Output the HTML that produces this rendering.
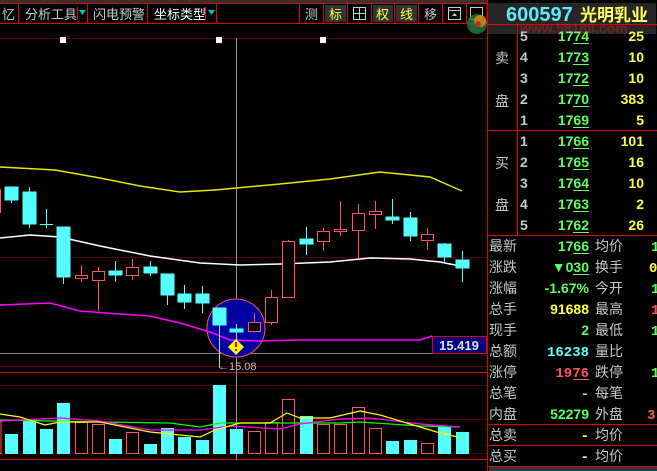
<!DOCTYPE html>
<html><head><meta charset="utf-8"><style>
body{margin:0;background:#000;width:657px;height:471px;overflow:hidden}
svg{display:block}
text{font-family:"Liberation Sans","Noto Sans CJK SC",sans-serif}
.z{font-size:14px;fill:#c8c8c8}
.t{font-size:13px;fill:#c8c8c8}
.n{font-family:"Liberation Mono","DejaVu Sans Mono",monospace;font-size:14px;font-weight:bold}
</style></head><body>
<svg width="657" height="471" viewBox="0 0 657 471">
<rect width="657" height="471" fill="#000"/>
<rect x="0" y="0" width="487" height="3" fill="#333"/>
<g fill="none" stroke="#e00000" stroke-width="1">
<rect x="-1" y="3.5" width="488" height="20"/>
<line x1="18.5" y1="3" x2="18.5" y2="24"/><line x1="87.5" y1="3" x2="87.5" y2="24"/><line x1="147.5" y1="3" x2="147.5" y2="24"/><line x1="216.5" y1="3" x2="216.5" y2="24"/><line x1="299.5" y1="3" x2="299.5" y2="24"/><line x1="323.5" y1="3" x2="323.5" y2="24"/><line x1="347.5" y1="3" x2="347.5" y2="24"/><line x1="371.5" y1="3" x2="371.5" y2="24"/><line x1="394.5" y1="3" x2="394.5" y2="24"/><line x1="418.5" y1="3" x2="418.5" y2="24"/><line x1="442.5" y1="3" x2="442.5" y2="24"/><line x1="466.5" y1="3" x2="466.5" y2="24"/>
</g>
<rect x="325" y="5" width="21" height="17" fill="#333"/>
<rect x="373" y="5" width="20" height="17" fill="#333"/>
<rect x="396" y="5" width="21" height="17" fill="#333"/>
<text class="t" x="2" y="19">忆</text>
<text class="t" x="25" y="19">分析工具</text><line x1="77.5" y1="7" x2="77.5" y2="20" stroke="#e00"/><path d="M79 10h7l-3.5 5z" fill="#00c0c0"/>
<text class="t" x="93" y="19">闪电预警</text>
<text class="t" x="154" y="19" style="fill:#fff">坐标类型</text><line x1="205.5" y1="7" x2="205.5" y2="20" stroke="#e00"/><path d="M208 10h7l-3.5 5z" fill="#00c0c0"/>
<text class="t" x="305" y="19">测</text>
<text class="t" x="329" y="19" style="fill:#ffff40">标</text>
<rect x="353.5" y="7.5" width="12" height="12" fill="none" stroke="#ccc"/><line x1="359.5" y1="8" x2="359.5" y2="19" stroke="#ccc"/><line x1="354" y1="13.5" x2="365" y2="13.5" stroke="#ccc"/>
<text class="t" x="376" y="19" style="fill:#ffff40">权</text>
<text class="t" x="400" y="19" style="fill:#ffff40">线</text>
<text class="t" x="424" y="19">移</text>
<rect x="448.5" y="7.5" width="12" height="12" fill="none" stroke="#ccc"/><line x1="449" y1="10.5" x2="460" y2="10.5" stroke="#ccc"/><path d="M452 16l2.5-3 2.5 3z" fill="#ccc"/>
<rect x="470.5" y="7.5" width="12" height="12" fill="none" stroke="#ccc"/>
<circle cx="477" cy="24" r="10" fill="#208040" opacity="0.8"/><circle cx="480" cy="21" r="6" fill="#c08020"/><circle cx="478" cy="24" r="3" fill="#c03020"/>
<line x1="0" y1="38.5" x2="487" y2="38.5" stroke="#600000"/>
<line x1="0" y1="257.5" x2="487" y2="257.5" stroke="#500000"/>
<line x1="0" y1="353.5" x2="487" y2="353.5" stroke="#808080"/>
<line x1="0" y1="366.5" x2="487" y2="366.5" stroke="#600000"/>
<line x1="0" y1="372.5" x2="487" y2="372.5" stroke="#e00000"/>
<line x1="0" y1="385.5" x2="487" y2="385.5" stroke="#500000"/>
<line x1="0" y1="419.5" x2="487" y2="419.5" stroke="#500000"/>
<line x1="0" y1="453.5" x2="487" y2="453.5" stroke="#500000"/>
<line x1="0" y1="459.5" x2="487" y2="459.5" stroke="#e00000"/>
<line x1="236.5" y1="38" x2="236.5" y2="460" stroke="#909090"/>
<g fill="#fff"><rect x="60" y="37" width="6" height="6"/><rect x="216" y="37" width="6" height="6"/><rect x="320" y="37" width="6" height="6"/></g>
<circle cx="236" cy="328" r="29" fill="#0000a0" stroke="#ff5050"/>
<polyline fill="none" stroke="#e8e800" stroke-width="1.5" points="0,167 55,170 100,178 140,186 180,192 215,190 280,184 330,179 380,172 430,177 462,191"/>
<polyline fill="none" stroke="#fff" stroke-width="1.5" points="0,238 30,235 60,237 100,246 150,256 200,263 240,265 280,264 330,262 370,258 410,259 440,262 460,266"/>
<polyline fill="none" stroke="#ff00ff" stroke-width="1.5" points="0,305 50,303 80,311 120,314 150,316 180,323 210,332 230,340 260,341 300,340 420,340 432,336"/>
<g fill="#55ffff" stroke="#55ffff">
<line x1="11.5" y1="187" x2="11.5" y2="203"/><rect x="5" y="187" width="13" height="13"/>
<line x1="29.5" y1="187" x2="29.5" y2="228"/><rect x="23" y="192" width="13" height="32"/>
<line x1="46.5" y1="209" x2="46.5" y2="228"/><line x1="40" y1="224.5" x2="53" y2="224.5"/>
<line x1="63.5" y1="227" x2="63.5" y2="284"/><rect x="57" y="227" width="13" height="50"/>
<line x1="115.5" y1="261" x2="115.5" y2="282"/><rect x="109" y="271" width="13" height="4"/>
<line x1="150.5" y1="261" x2="150.5" y2="276"/><rect x="144" y="267" width="13" height="6"/>
<line x1="167.5" y1="274" x2="167.5" y2="305"/><rect x="161" y="274" width="13" height="21"/>
<line x1="184.5" y1="285" x2="184.5" y2="309"/><rect x="178" y="294" width="13" height="8"/>
<line x1="202.5" y1="286" x2="202.5" y2="313"/><rect x="196" y="294" width="13" height="9"/>
<line x1="219.5" y1="308" x2="219.5" y2="368"/><rect x="213" y="308" width="13" height="17"/>
<line x1="236.5" y1="324" x2="236.5" y2="340"/><rect x="230" y="329" width="13" height="3"/>
<line x1="306.5" y1="227" x2="306.5" y2="255"/><rect x="300" y="239" width="13" height="5"/>
<line x1="392.5" y1="199" x2="392.5" y2="224"/><rect x="386" y="217" width="13" height="3"/>
<line x1="410.5" y1="212" x2="410.5" y2="241"/><rect x="404" y="218" width="13" height="18"/>
<line x1="444.5" y1="243" x2="444.5" y2="262"/><rect x="438" y="244" width="13" height="13"/>
<line x1="462.5" y1="251" x2="462.5" y2="282"/><rect x="456" y="260" width="13" height="8"/>
</g>
<g fill="#000" stroke="#ff5555">
<line x1="0.5" y1="189" x2="0.5" y2="213"/>
<line x1="81.5" y1="265" x2="81.5" y2="282"/><rect x="75.5" y="275.5" width="12" height="3"/>
<line x1="98.5" y1="267" x2="98.5" y2="311"/><rect x="92.5" y="271.5" width="12" height="9"/>
<line x1="132.5" y1="259" x2="132.5" y2="280"/><rect x="126.5" y="267.5" width="12" height="8"/>
<line x1="254.5" y1="313" x2="254.5" y2="331"/><rect x="248.5" y="322.5" width="12" height="9"/>
<line x1="271.5" y1="290" x2="271.5" y2="325"/><rect x="265.5" y="297.5" width="12" height="25"/>
<line x1="288.5" y1="240" x2="288.5" y2="297"/><rect x="282.5" y="241.5" width="12" height="56"/>
<line x1="323.5" y1="228" x2="323.5" y2="251"/><rect x="317.5" y="231.5" width="12" height="10"/>
<line x1="340.5" y1="201" x2="340.5" y2="236"/><rect x="334.5" y="229.5" width="12" height="2"/>
<line x1="358.5" y1="204" x2="358.5" y2="258"/><rect x="352.5" y="213.5" width="12" height="17"/>
<line x1="375.5" y1="201" x2="375.5" y2="229"/><rect x="369.5" y="211.5" width="12" height="3"/>
<line x1="427.5" y1="228" x2="427.5" y2="250"/><rect x="421.5" y="234.5" width="12" height="6"/>
</g>
<path d="M236 339l8 8-8 8-8-8z" fill="#ffff00"/><rect x="235" y="342" width="2" height="5" fill="#e00"/><rect x="235" y="349" width="2" height="2" fill="#e00"/>
<rect x="432.5" y="336.5" width="54" height="17" fill="#000080" stroke="#e00000"/>
<text x="459" y="350" text-anchor="middle" style="font-family:'Liberation Sans',sans-serif;font-size:13px;font-weight:bold;fill:#e0e0e0">15.419</text>
<text x="218" y="370" style="font-family:'Liberation Sans',sans-serif;font-size:11px;fill:#c0c0c0">←15.08</text>
<g fill="#55ffff">
<rect x="5" y="434" width="13" height="20"/><rect x="23" y="420" width="13" height="34"/><rect x="40" y="429" width="13" height="25"/><rect x="57" y="403" width="13" height="51"/>
<rect x="109" y="439" width="13" height="15"/><rect x="144" y="444" width="13" height="10"/><rect x="161" y="428" width="13" height="26"/><rect x="178" y="437" width="13" height="17"/><rect x="196" y="440" width="13" height="14"/><rect x="213" y="385" width="13" height="69"/><rect x="230" y="429" width="13" height="25"/><rect x="300" y="416" width="13" height="38"/><rect x="386" y="441" width="13" height="13"/><rect x="404" y="440" width="13" height="14"/><rect x="438" y="426" width="13" height="28"/><rect x="456" y="432" width="13" height="22"/>
</g>
<g fill="none" stroke="#ff5555">
<rect x="-1" y="421.5" width="2" height="32"/>
<rect x="75.5" y="422.5" width="12" height="31"/><rect x="92.5" y="424.5" width="12" height="29"/><rect x="126.5" y="432.5" width="12" height="21"/><rect x="248.5" y="431.5" width="12" height="22"/><rect x="265.5" y="422.5" width="12" height="31"/><rect x="282.5" y="399.5" width="12" height="54"/><rect x="317.5" y="424.5" width="12" height="29"/><rect x="334.5" y="424.5" width="12" height="29"/><rect x="352.5" y="407.5" width="12" height="46"/><rect x="369.5" y="428.5" width="12" height="25"/><rect x="421.5" y="443.5" width="12" height="10"/>
</g>
<polyline fill="none" stroke="#00ff00" stroke-width="1.2" points="0,420 100,422 170,423 200,427 220,423 300,423 340,423 360,422 420,426 460,427"/>
<polyline fill="none" stroke="#ff00ff" stroke-width="1.2" points="0,421 60,418 100,421 150,430 200,430 230,426 280,429 300,424 340,419 370,418 420,424 460,427"/>
<polyline fill="none" stroke="#ffff00" stroke-width="1.2" points="0,414 20,417 45,425 60,422 100,422 150,432 200,437 215,430 240,423 270,423 287,413 300,418 330,418 360,411 380,415 420,427 440,433 458,437"/>
<rect x="488" y="3" width="168" height="31" fill="#262626"/>
<line x1="487.5" y1="0" x2="487.5" y2="471" stroke="#e00000"/>
<line x1="487" y1="24.5" x2="657" y2="24.5" stroke="#e00000"/>
<text x="506" y="21" style="font-family:'Liberation Sans',sans-serif;font-size:20px;font-weight:bold;fill:#60e8ff">600597</text>
<text x="580" y="21" style="font-family:'Liberation Sans','Noto Sans CJK SC',sans-serif;font-size:17px;font-weight:bold;fill:#ffff60">光明乳业</text>
<text x="520" y="33" style="font-family:'Liberation Sans',sans-serif;font-size:14px;font-weight:bold;fill:#ff2020;opacity:0.35">www.58188.com</text>
<line x1="517.5" y1="25" x2="517.5" y2="235" stroke="#e00000"/>
<line x1="487" y1="130.5" x2="657" y2="130.5" stroke="#e00000"/>
<line x1="487" y1="235.5" x2="657" y2="235.5" stroke="#e00000"/>
<line x1="487" y1="424.5" x2="657" y2="424.5" stroke="#e00000"/>
<line x1="487" y1="445.5" x2="657" y2="445.5" stroke="#e00000"/>
<line x1="487" y1="466.5" x2="657" y2="466.5" stroke="#e00000"/>
<rect x="489" y="467" width="168" height="4" fill="#333"/>
<text class="z" x="495" y="63">卖</text><text class="z" x="495" y="106">盘</text>
<text class="z" x="495" y="168">买</text><text class="z" x="495" y="210">盘</text>
<g class="n" fill="#c8c8c8">
<text x="520" y="41">5</text><text x="520" y="62">4</text><text x="520" y="83">3</text><text x="520" y="104">2</text><text x="520" y="125">1</text>
<text x="520" y="146">1</text><text x="520" y="167">2</text><text x="520" y="188">3</text><text x="520" y="209">4</text><text x="520" y="230">5</text>
</g>
<g class="n" fill="#60ff60" text-anchor="end">
<text x="589" y="41">1774</text><text x="589" y="62">1773</text><text x="589" y="83">1772</text><text x="589" y="104">1770</text><text x="589" y="125">1769</text>
<text x="589" y="146">1766</text><text x="589" y="167">1765</text><text x="589" y="188">1764</text><text x="589" y="209">1763</text><text x="589" y="230">1762</text>
<text x="589" y="251">1766</text><text x="589" y="272">▼030</text><text x="589" y="293">-1.67%</text><text x="589" y="335">2</text><text x="589" y="419">52279</text>
</g>
<g stroke="#60ff60">
<line x1="573" y1="43.5" x2="589" y2="43.5"/><line x1="573" y1="64.5" x2="589" y2="64.5"/><line x1="573" y1="85.5" x2="589" y2="85.5"/><line x1="573" y1="106.5" x2="589" y2="106.5"/><line x1="573" y1="127.5" x2="589" y2="127.5"/>
<line x1="573" y1="148.5" x2="589" y2="148.5"/><line x1="573" y1="169.5" x2="589" y2="169.5"/><line x1="573" y1="190.5" x2="589" y2="190.5"/><line x1="573" y1="211.5" x2="589" y2="211.5"/><line x1="573" y1="232.5" x2="589" y2="232.5"/>
<line x1="573" y1="253.5" x2="589" y2="253.5"/><line x1="573" y1="274.5" x2="589" y2="274.5"/>
</g>
<g class="n" fill="#ffff40" text-anchor="end">
<text x="644" y="41">25</text><text x="644" y="62">10</text><text x="644" y="83">10</text><text x="644" y="104">383</text><text x="644" y="125">5</text>
<text x="644" y="146">101</text><text x="644" y="167">16</text><text x="644" y="188">10</text><text x="644" y="209">2</text><text x="644" y="230">26</text>
<text x="589" y="314">91688</text>
</g>
<text class="n" x="589" y="356" text-anchor="end" fill="#60ffff">16238</text>
<text class="n" x="589" y="377" text-anchor="end" fill="#ff5555">1976</text>
<line x1="573" y1="379.5" x2="589" y2="379.5" stroke="#ff5555"/>
<text class="n" x="589" y="398" text-anchor="end" fill="#c8c8c8">-</text>
<text class="n" x="589" y="440" text-anchor="end" fill="#ffff40">-</text>
<text class="n" x="589" y="461" text-anchor="end" fill="#ffff40">-</text>
<text class="n" x="651" y="251" fill="#60ff60">1</text>
<text class="n" x="649" y="272" fill="#ffff40">0</text>
<text class="n" x="651" y="293" fill="#60ff60">1</text>
<text class="n" x="651" y="314" fill="#ff5555">1</text>
<text class="n" x="651" y="335" fill="#60ff60">1</text>
<text class="n" x="651" y="377" fill="#60ff60">1</text>
<text class="n" x="647" y="419" fill="#ff5555">3</text>
<g class="z">
<text x="489" y="251">最新</text><text x="489" y="272">涨跌</text><text x="489" y="293">涨幅</text><text x="489" y="314">总手</text><text x="489" y="335">现手</text><text x="489" y="356">总额</text><text x="489" y="377">涨停</text><text x="489" y="398">总笔</text><text x="489" y="419">内盘</text><text x="489" y="440">总卖</text><text x="489" y="461">总买</text>
<text x="595" y="251">均价</text><text x="595" y="272">换手</text><text x="595" y="293">今开</text><text x="595" y="314">最高</text><text x="595" y="335">最低</text><text x="595" y="356">量比</text><text x="595" y="377">跌停</text><text x="595" y="398">每笔</text><text x="595" y="419">外盘</text><text x="595" y="440">均价</text><text x="595" y="461">均价</text>
</g>
</svg>
</body></html>
